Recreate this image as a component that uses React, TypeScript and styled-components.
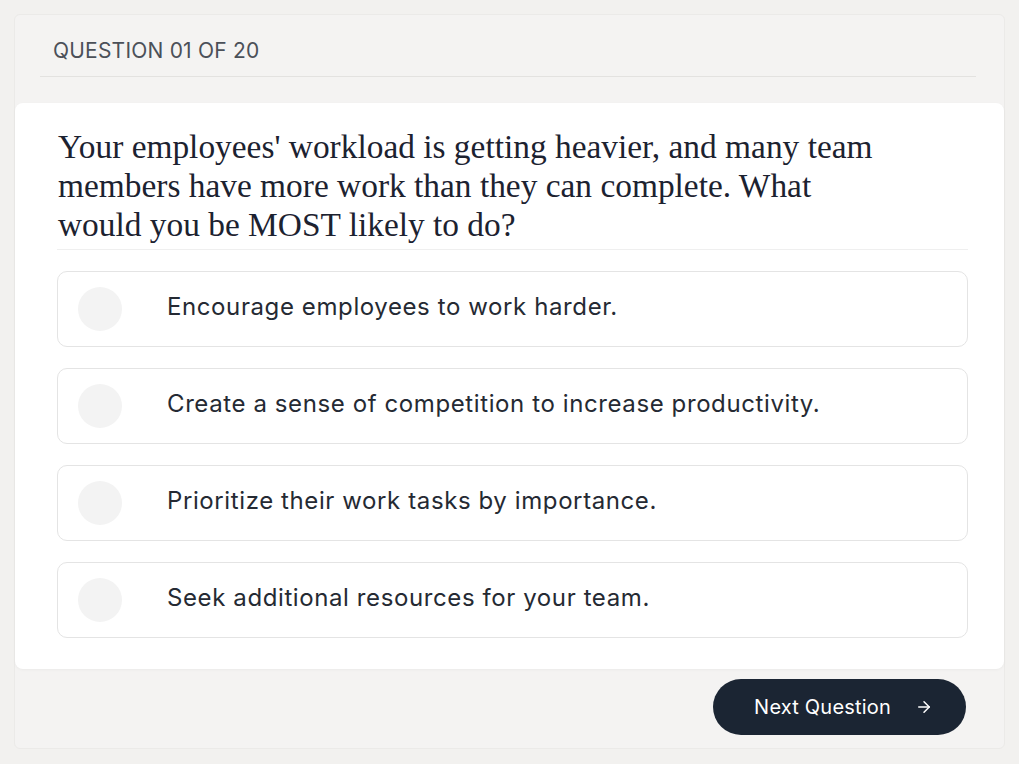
import React from 'react';
import styled, { createGlobalStyle } from 'styled-components';

const GlobalStyle = createGlobalStyle`
  html, body {
    margin: 0;
    padding: 0;
    background: #f2f1ef;
  }
  body {
    font-family: Inter, "Noto Sans", sans-serif;
  }
`;

const Page = styled.div`
  padding: 14px 14px 15px 14px;
  height: 764px;
  box-sizing: border-box;
`;

const Panel = styled.div`
  display: flex;
  flex-direction: column;
  height: 100%;
  box-sizing: border-box;
  background: #f4f3f2;
  border: 1px solid #ebeae8;
  border-radius: 6px;
`;

const Header = styled.div`
  margin: 0 28px 0 25px;
  padding: 22px 0 0 13px;
  height: 62px;
  box-sizing: border-box;
  border-bottom: 1px solid #e3e2e0;
`;

const Counter = styled.div`
  font-size: 21px;
  line-height: 28px;
  letter-spacing: 0.01em;
  color: #4b5058;
  text-transform: uppercase;
`;

const Card = styled.div`
  margin-top: 26px;
  background: #ffffff;
  border-radius: 8px;
  padding: 24px 36px 31px 42px;
  box-shadow: 0 1px 3px rgba(0, 0, 0, 0.04);
`;

const Question = styled.h1`
  margin: 0;
  padding: 0 0 5px 1px;
  font-family: "Liberation Serif", "DejaVu Serif", serif;
  font-weight: 400;
  font-size: 33.4px;
  line-height: 39px;
  color: #1c2230;
  border-bottom: 1px solid #efefef;
`;

const QuestionText = styled.span`
  display: block;
  max-width: 830px;
`;

const Options = styled.div`
  display: flex;
  flex-direction: column;
  gap: 21px;
  margin-top: 21px;
`;

const Option = styled.label`
  display: flex;
  align-items: center;
  height: 76px;
  box-sizing: border-box;
  padding: 0 20px;
  border: 1px solid #e4e4e4;
  border-radius: 10px;
  background: #fff;
  cursor: pointer;
`;

const Radio = styled.span`
  flex: none;
  width: 44px;
  height: 44px;
  border-radius: 50%;
  background: #f3f3f3;
`;

const OptionText = styled.span`
  margin-left: 45px;
  padding-bottom: 6px;
  font-size: 24px;
  letter-spacing: 0.6px;
  color: #252a33;
`;

const Footer = styled.div`
  display: flex;
  justify-content: flex-end;
  padding: 10px 38px 0 0;
`;

const NextButton = styled.button`
  display: flex;
  align-items: center;
  gap: 24px;
  height: 56px;
  padding: 0 33px 0 41px;
  border: none;
  border-radius: 28px;
  background: #1b2533;
  color: #ffffff;
  font-family: Inter, "Noto Sans", sans-serif;
  font-size: 20px;
  letter-spacing: 0.2px;
  cursor: pointer;
`;

const answers = [
  'Encourage employees to work harder.',
  'Create a sense of competition to increase productivity.',
  'Prioritize their work tasks by importance.',
  'Seek additional resources for your team.',
];

export default function App(): JSX.Element {
  return (
    <>
      <GlobalStyle />
      <Page>
        <Panel>
          <Header>
            <Counter>Question 01 of 20</Counter>
          </Header>
          <Card>
            <Question>
              <QuestionText>
                Your employees' workload is getting heavier, and many team members have more work than they can
                complete. What would you be MOST likely to do?
              </QuestionText>
            </Question>
            <Options>
              {answers.map((text) => (
                <Option key={text}>
                  <Radio />
                  <OptionText>{text}</OptionText>
                </Option>
              ))}
            </Options>
          </Card>
          <Footer>
            <NextButton type="button">
              Next Question
              <svg width="18" height="18" viewBox="0 0 24 24" fill="none" stroke="currentColor" strokeWidth="2" strokeLinecap="round" strokeLinejoin="round">
                <path d="M5 12h14" />
                <path d="m12 5 7 7-7 7" />
              </svg>
            </NextButton>
          </Footer>
        </Panel>
      </Page>
    </>
  );
}
